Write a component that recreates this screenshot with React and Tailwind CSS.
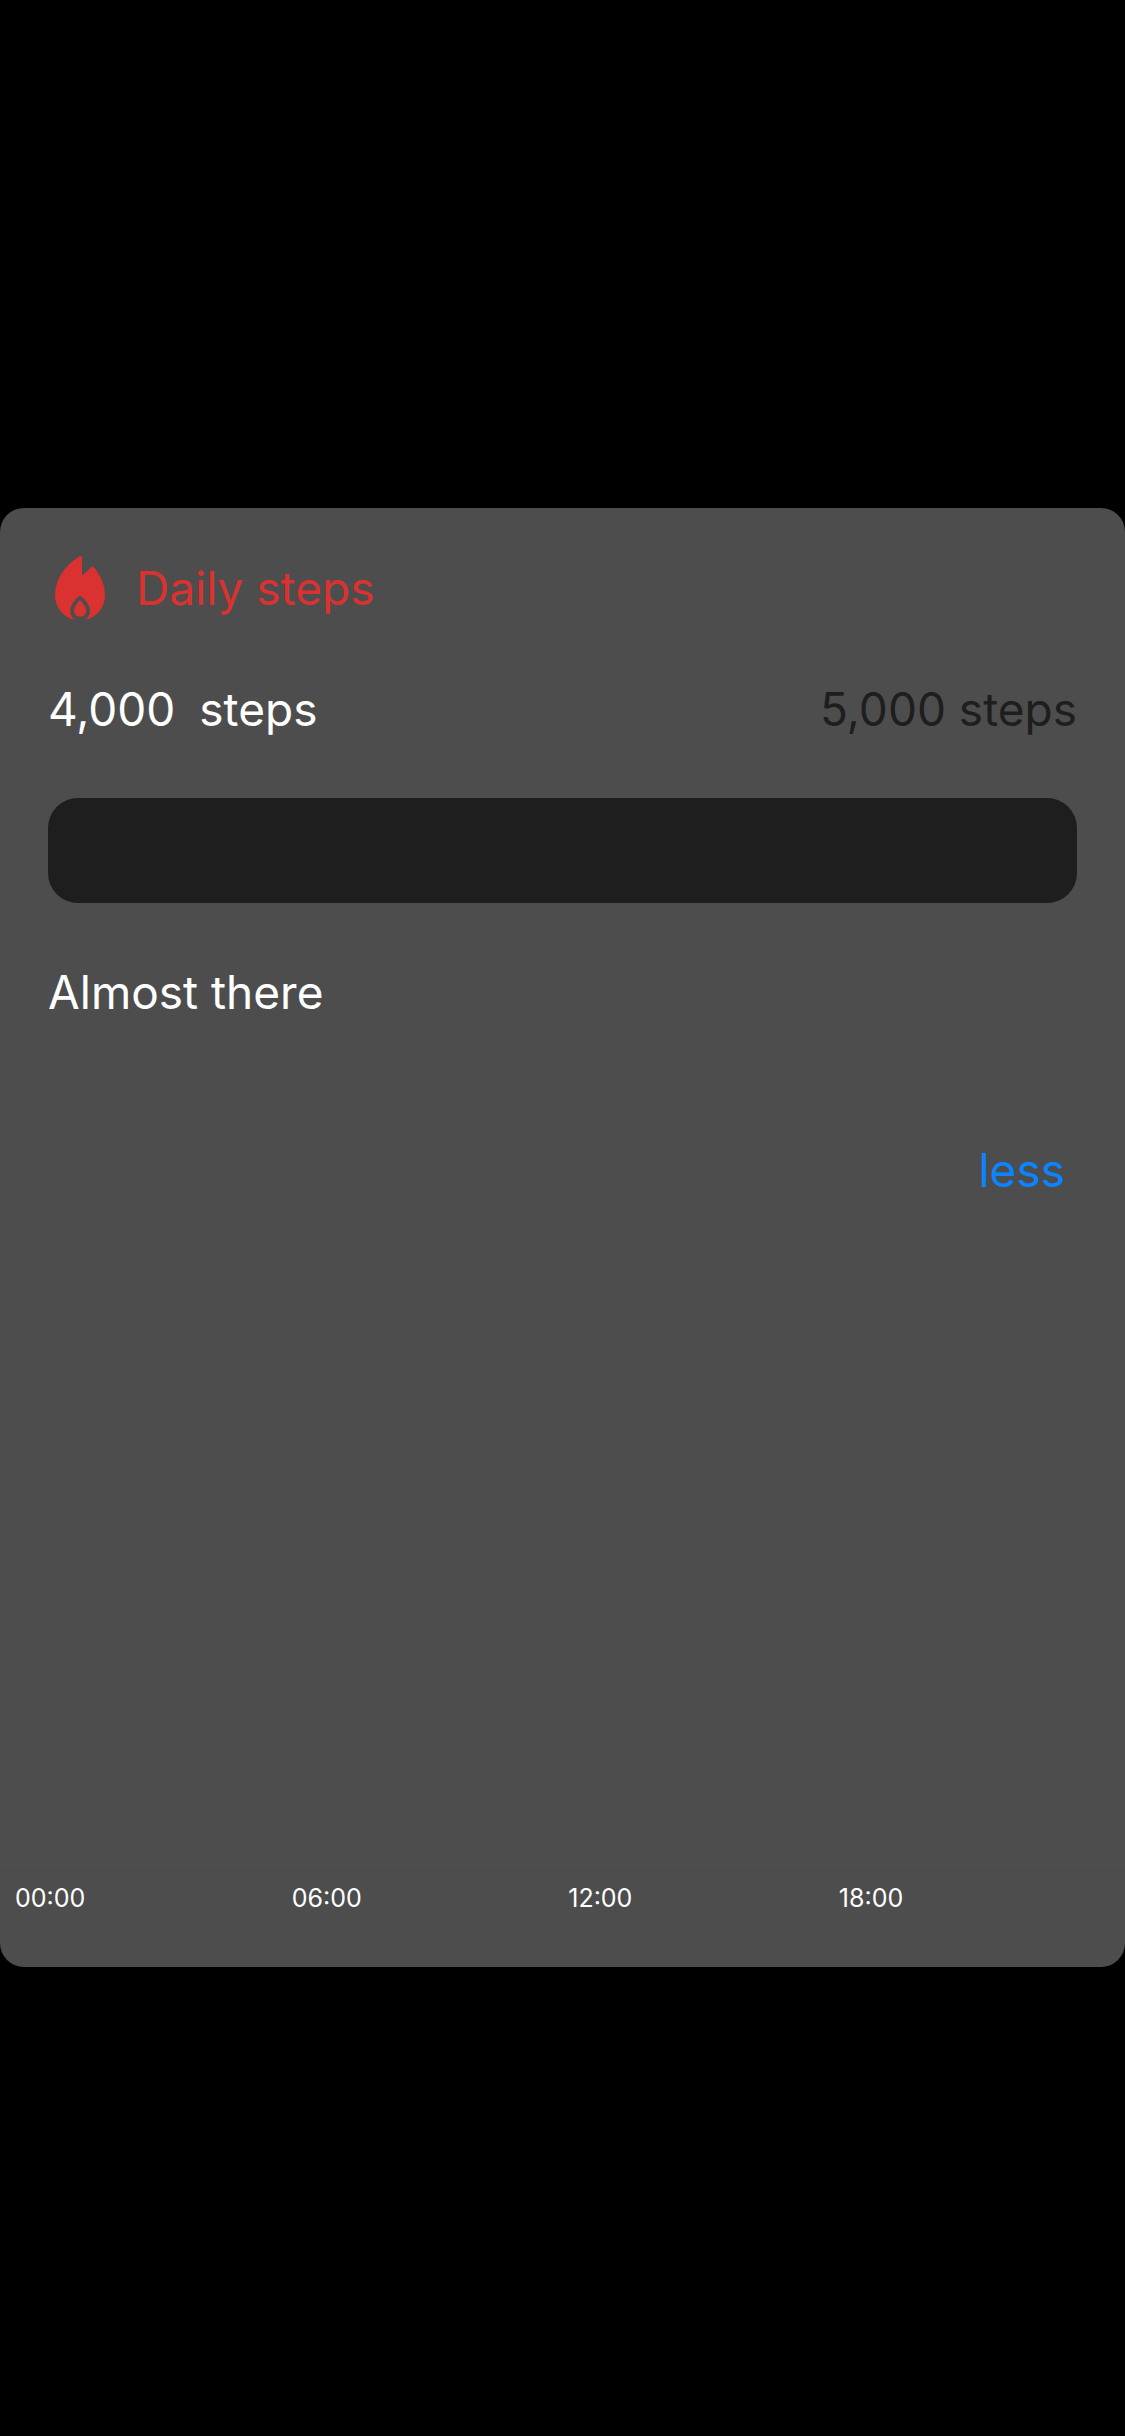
const HOURS = ["00:00", "06:00", "12:00", "18:00"];

function FlameIcon() {
  return (
    <svg viewBox="0 0 64 64" className="size-16 shrink-0" aria-hidden="true">
      <path
        fill="#da3230"
        d="M31.2 .4C32.6-.5 34 .3 34 1.8V17.8C34 19.2 34.7 19.4 35.6 18.5L43 11.3C44.2 10.2 45.1 10.2 46.1 11.5C52.5 19.5 57 29 57 39C57 51 49 61.5 36.5 64C39.9 62.3 42 59 42 55C42 49.5 38 44.3 33.4 40.4C32.5 39.7 31.5 39.7 30.6 40.4C26 44.3 22.2 49.5 22.2 55C22.2 59 24.2 62.3 27.5 64C15 61.5 7 51 7 39C7 24 16.5 9.5 31.2 .4Z"
      />
      <path
        fill="#da3230"
        d="M32 44.2C35 47 38 51.2 38 55C38 58.6 35.2 60.6 32 60.6C28.8 60.6 26.2 58.6 26.2 55C26.2 51.2 29 47 32 44.2Z"
      />
    </svg>
  );
}

export default function App() {
  return (
    <main className="min-h-screen bg-black pt-[508px] font-['Inter',sans-serif] text-[46px]/[60px] text-white">
      <section className="rounded-3xl bg-[#4d4d4d] pt-12 pb-[53px]">
        <div className="flex flex-col px-12">
          <header className="flex items-center gap-6 text-[#da3230]">
            <FlameIcon />
            <h1>Daily steps</h1>
          </header>
          <div className="mt-[59px] flex justify-between">
            <p className="flex gap-6">
              <span>4,000</span>
              <span>steps</span>
            </p>
            <p className="text-[#1e1e1e]">5,000 steps</p>
          </div>
          <div
            role="progressbar"
            aria-label="Daily steps"
            aria-valuemin={0}
            aria-valuemax={5000}
            aria-valuenow={4000}
            className="mt-[59px] h-[105px] rounded-[30px] bg-[#1e1e1e]"
          />
          <p className="mt-[59px]">Almost there</p>
          <button type="button" className="mt-[118px] self-end px-3 text-[#0a84ff]">
            less
          </button>
        </div>
        <div className="h-[666px] border-b border-[#505050]" />
        <div className="mt-4 flex w-[81%] justify-between pl-[15px] pr-2 text-[25px]/8">
          {HOURS.map((hour) => (
            <span key={hour}>{hour}</span>
          ))}
        </div>
      </section>
    </main>
  );
}
